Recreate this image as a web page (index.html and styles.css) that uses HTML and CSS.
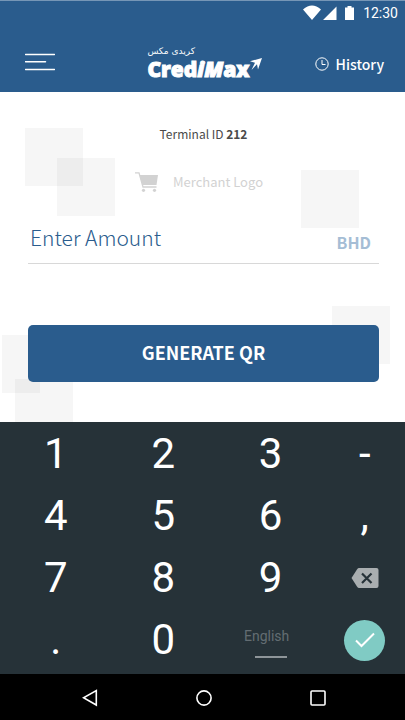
FILE: index.html
```html
<!DOCTYPE html>
<html lang="en">
<head>
<meta charset="utf-8">
<meta name="viewport" content="width=device-width, initial-scale=1">
<title>CrediMax</title>
<link rel="stylesheet" href="styles.css">
</head>
<body>
<header class="header">
  <div class="status">
    <svg width="54" height="16" viewBox="0 0 54 16" aria-hidden="true">
      <path fill="#fff" d="M0 4.500Q9-3.500 18 4.500L9 15ZM20 15 33.500 1.500V15ZM42 2.500h2.500V1h4v1.500H51V15h-9Z"/>
    </svg>
    <span class="clock">12:30</span>
  </div>
  <div class="appbar">
    <button class="menu" type="button" aria-label="Menu">
      <svg width="30" height="18" viewBox="0 0 30 18"><path d="M.5 1.500h29M.5 8.700h20M.5 16.500h29" stroke="#fff" stroke-width="1.500" stroke-linecap="round"/></svg>
    </button>
    <div class="logo">
      <span class="logo-arabic" lang="ar" dir="rtl">كريدى مكس</span>
      <span class="logo-row">
        <span class="logo-name">Cred<em>iM</em>ax</span>
        <svg class="logo-arrow" width="12" height="12" viewBox="0 0 12 12" aria-hidden="true"><path fill="#fff" d="M0 3.200 12 0 8 11.500 7 6.200 1.500 12 5 4.700Z"/></svg>
      </span>
    </div>
    <a class="history" href="#history">
      <svg width="14" height="14" viewBox="0 0 14 14" fill="none" stroke="#fff" aria-hidden="true"><circle cx="7" cy="7" r="6.200"/><path d="M7 3v4.500h3.500"/></svg>
      History
    </a>
  </div>
</header>
<main class="main">
  <i class="tile tile-a"></i><i class="tile tile-b"></i><i class="tile tile-c"></i>
  <i class="tile tile-d"></i><i class="tile tile-e"></i><i class="tile tile-f"></i>
  <p class="terminal">Terminal ID <b>212</b></p>
  <div class="merchant">
    <svg width="24" height="20" viewBox="0 0 24 20" aria-hidden="true">
      <path fill="none" stroke="#d2d2d2" stroke-width="1.300" d="M0 .8h4l4 14.200h13.500"/>
      <path fill="#d2d2d2" d="M4.500 3H23l-1.500 10H7.500Z"/>
      <circle cx="8.500" cy="18.300" r="1.600" fill="#d2d2d2"/><circle cx="19.500" cy="18.300" r="1.600" fill="#d2d2d2"/>
    </svg>
    <span>Merchant Logo</span>
  </div>
  <form class="form">
    <div class="amount">
      <input class="amount-input" type="text" inputmode="decimal" placeholder="Enter Amount" aria-label="Enter Amount">
      <span class="currency">BHD</span>
    </div>
    <button class="generate" type="button">GENERATE QR</button>
  </form>
</main>
<section class="keyboard" aria-label="Keyboard">
  <button class="key" type="button">1</button>
  <button class="key" type="button">2</button>
  <button class="key" type="button">3</button>
  <button class="key" type="button">-</button>
  <button class="key" type="button">4</button>
  <button class="key" type="button">5</button>
  <button class="key" type="button">6</button>
  <button class="key" type="button">,</button>
  <button class="key" type="button">7</button>
  <button class="key" type="button">8</button>
  <button class="key" type="button">9</button>
  <button class="key" type="button" aria-label="Delete">
    <svg width="28" height="20" viewBox="0 0 28 20"><path fill="#a9aeb0" d="M8 0h17.500Q27.500 0 27.500 2v16q0 2-2 2H8q-1 0-1.700-1L.5 10 6.300 1Q7 0 8 0Z"/><path d="m11 5.500 9.500 9.500m0-9.500L11 15" stroke="#263238" stroke-width="2.200"/></svg>
  </button>
  <button class="key" type="button">.</button>
  <button class="key" type="button">0</button>
  <button class="key space" type="button"><span>English</span></button>
  <button class="key" type="button" aria-label="Done">
    <span class="done"><svg width="20" height="16" viewBox="0 0 20 16"><path d="m1 8.500 5.500 5.500L19 1.500" fill="none" stroke="#fff" stroke-width="2"/></svg></span>
  </button>
</section>
<nav class="navbar" aria-label="System">
  <button type="button" aria-label="Back"><svg width="16" height="18" viewBox="0 0 16 18"><path d="M14.300 1.500v14.500L1.500 8.700Z"/></svg></button>
  <button type="button" aria-label="Home"><svg width="16" height="18" viewBox="0 0 16 18"><circle cx="8" cy="9" r="7.100"/></svg></button>
  <button type="button" aria-label="Recent"><svg width="16" height="18" viewBox="0 0 16 18"><rect x="1" y="2" width="14" height="14" rx="1"/></svg></button>
</nav>
</body>
</html>
```
FILE: styles.css
```css
* { box-sizing: border-box; }
body {
  margin: 0;
  min-height: 100vh;
  display: flex;
  flex-direction: column;
  background: #fff;
  color: #4a4a4a;
  font-family: "Noto Sans CJK SC", sans-serif;
}
button { padding: 0; border: 0; background: none; color: inherit; font: inherit; }
svg { display: block; }

.header {
  height: 92px;
  background: #2a5c8d;
  border-top: 1px solid #7696b6;
  color: #fff;
}
.status {
  display: flex;
  justify-content: flex-end;
  align-items: center;
  gap: 6px;
  height: 23px;
  padding-right: 7px;
}
.clock { font: 14px/20px Roboto, sans-serif; }
.appbar {
  display: grid;
  grid-template-columns: 1fr auto 1fr;
  align-items: center;
  height: 68px;
  padding: 7px 21px 0 25px;
}
.menu { justify-self: start; }
.logo {
  display: flex;
  flex-direction: column;
  align-items: flex-start;
}
.logo-arabic { font: 9px/14px "DejaVu Sans", sans-serif; }
.logo-row { display: flex; align-items: flex-start; }
.logo-name {
  font: 800 21px/22px "Open Sans", sans-serif;
  -webkit-text-stroke: 1px #fff;
}
.history {
  justify-self: end;
  display: flex;
  align-items: center;
  gap: 7px;
  padding-top: 4px;
  color: #fff;
  font-size: 14px;
  line-height: 20px;
  font-weight: 500;
  text-decoration: none;
}

.main {
  position: relative;
  flex: 1;
  padding: 32px 26px 40px 28px;
  overflow: hidden;
}
.tile {
  position: absolute;
  z-index: -1;
  width: 58px;
  height: 58px;
  background: rgba(0, 0, 0, 0.035);
}
.tile-a { left: 25px; top: 36px; }
.tile-b { left: 57px; top: 66px; }
.tile-c { right: 46px; top: 78px; }
.tile-d { right: 15px; top: 214px; }
.tile-e { left: 2px; top: 243px; width: 38px; }
.tile-f { left: 15px; top: 287px; }

.terminal { margin: 0; text-align: center; font-size: 12px; line-height: 20px; }
.merchant {
  display: flex;
  justify-content: center;
  align-items: center;
  gap: 14px;
  margin-top: 28px;
  padding-right: 9px;
  color: #d2d2d2;
  font-size: 13px;
  line-height: 20px;
}
.amount {
  display: flex;
  align-items: center;
  height: 72px;
  border-bottom: 1px solid #d8d8d8;
  padding: 18px 8px 0 2px;
}
.amount-input {
  flex: 1;
  min-width: 0;
  padding: 0;
  border: 0;
  outline: 0;
  background: none;
  color: #2a5c8d;
  font: 300 21px/32px "Noto Sans CJK SC", sans-serif;
}
.amount-input::placeholder { color: #2a5c8d; opacity: 1; }
.currency { padding-top: 10px; color: #a5bdd5; font-size: 16px; line-height: 24px; font-weight: 700; }
.generate {
  display: block;
  width: 100%;
  height: 57px;
  margin-top: 61px;
  padding-bottom: 4px;
  border-radius: 5px;
  background: #2a5c8d;
  color: #fff;
  font-size: 18px;
  line-height: 24px;
  font-weight: 700;
}

.keyboard {
  display: grid;
  grid-template-columns: 4fr 4fr 4fr 3fr;
  grid-auto-rows: 62px;
  padding: 1px 0 3px 2px;
  background: #263238;
  color: #fff;
}
.key {
  display: flex;
  align-items: center;
  justify-content: center;
  font: 42px/62px Roboto, sans-serif;
}
.space {
  flex-direction: column;
  gap: 10px;
  padding-top: 3px;
  color: #636d72;
  font-size: 14px;
  line-height: 20px;
}
.space span { padding-right: 8px; }
.space::after { content: ""; width: 32px; height: 2px; background: #8e9599; }
.done {
  display: grid;
  place-items: center;
  width: 41px;
  height: 41px;
  border-radius: 50%;
  background: #80cbc4;
}
.navbar {
  display: flex;
  justify-content: center;
  align-items: center;
  gap: 98px;
  height: 46px;
  padding: 1px 0 0 2px;
  background: #000;
}
.navbar svg { fill: none; stroke: #fff; stroke-width: 1.6; }
```
